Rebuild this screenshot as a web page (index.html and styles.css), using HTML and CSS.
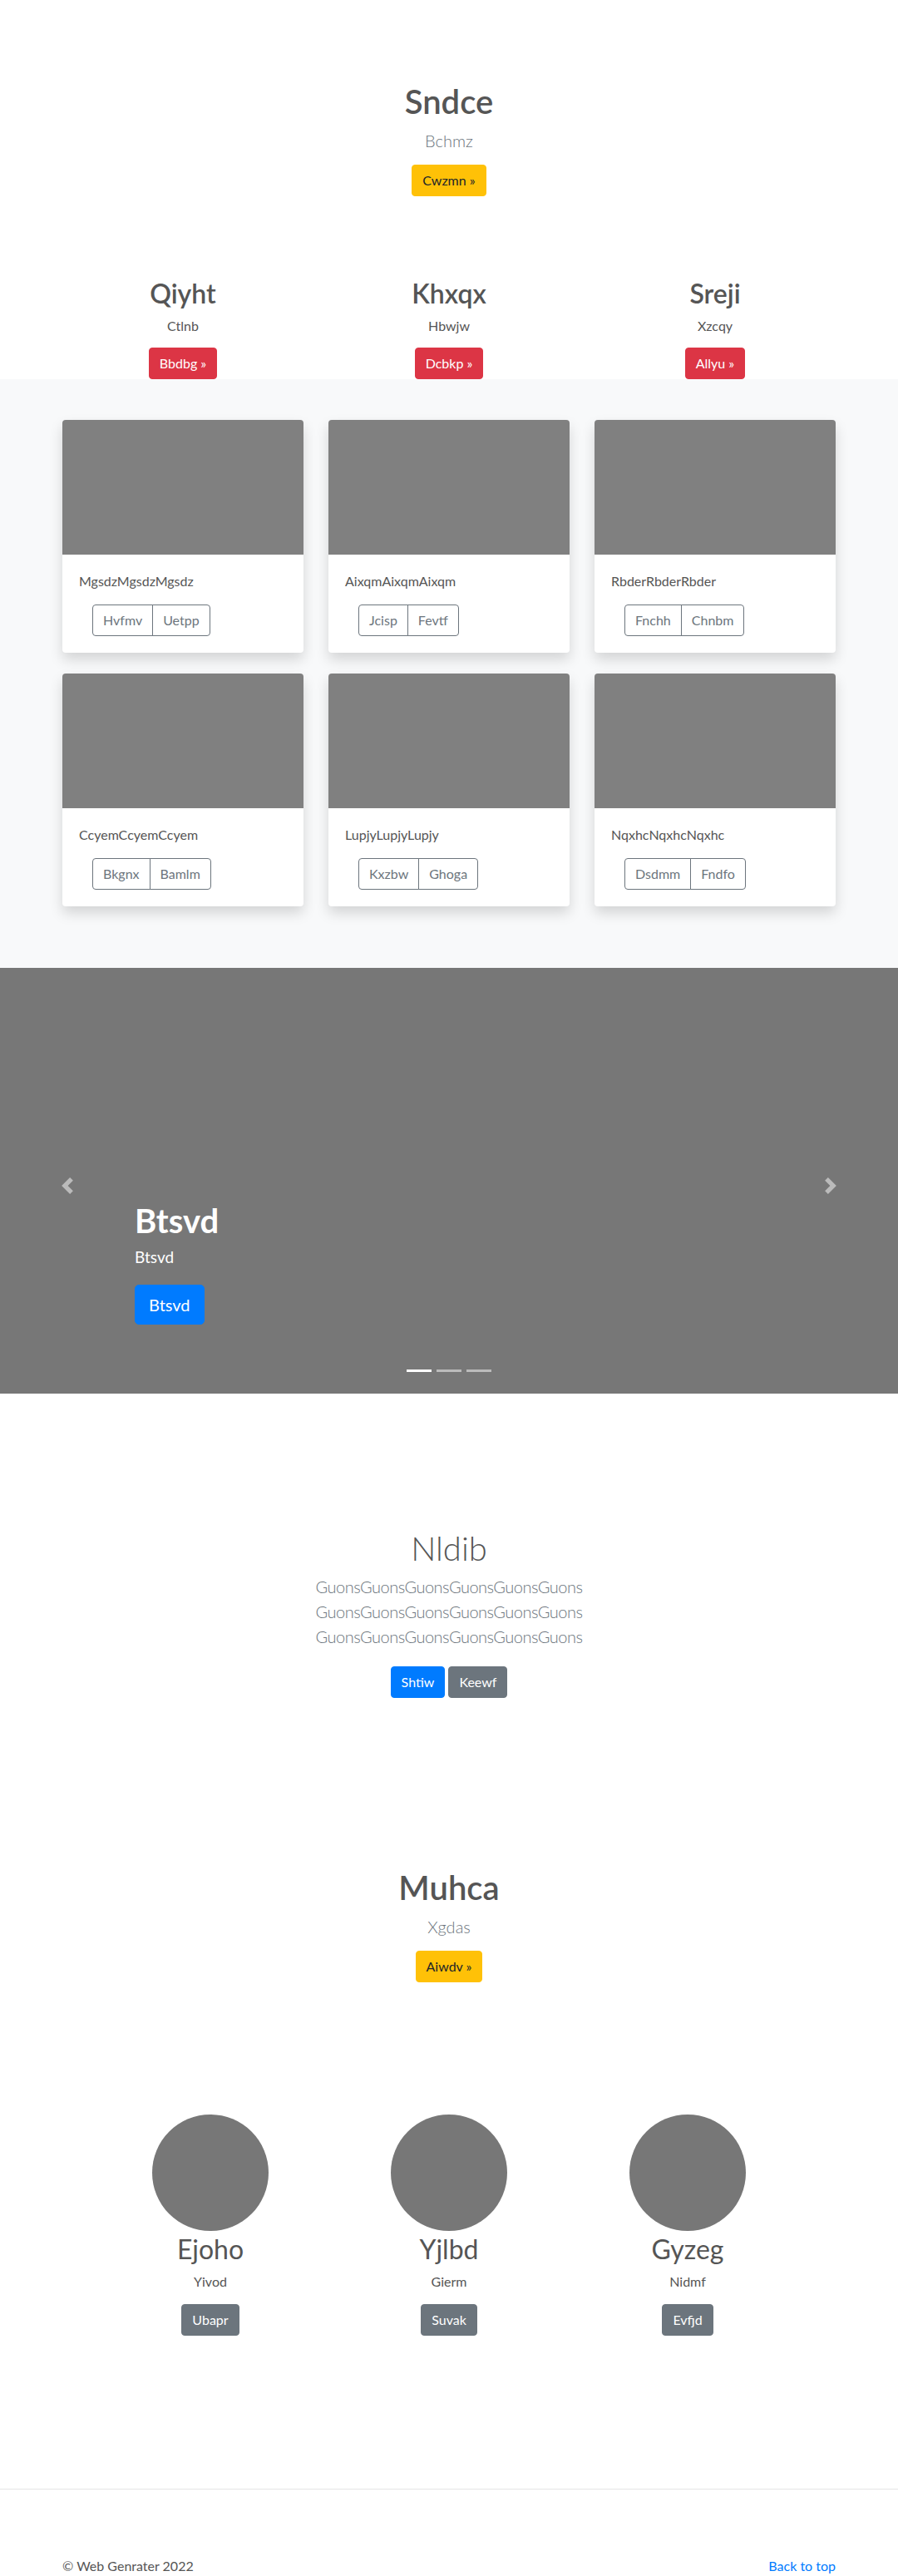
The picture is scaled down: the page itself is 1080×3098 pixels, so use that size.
FILE: index.html
```html
<!DOCTYPE html>
<html lang="en">
<head>
<meta charset="utf-8">
<title>Sndce</title>
<link rel="stylesheet" href="styles.css">
</head>
<body>
<section class="hero">
  <h1 class="hero-title">Sndce</h1>
  <p class="lead">Bchmz</p>
  <p class="btn-row"><a class="btn btn-warning" href="#">Cwzmn &raquo;</a></p>
</section>

<section class="marketing">
  <div class="mk-col">
    <h2 class="mk-title">Qiyht</h2>
    <p class="mk-text">Ctlnb</p>
    <p class="btn-row"><a class="btn btn-danger" href="#">Bbdbg &raquo;</a></p>
  </div>
  <div class="mk-col">
    <h2 class="mk-title">Khxqx</h2>
    <p class="mk-text">Hbwjw</p>
    <p class="btn-row"><a class="btn btn-danger" href="#">Dcbkp &raquo;</a></p>
  </div>
  <div class="mk-col">
    <h2 class="mk-title">Sreji</h2>
    <p class="mk-text">Xzcqy</p>
    <p class="btn-row"><a class="btn btn-danger" href="#">Allyu &raquo;</a></p>
  </div>
</section>

<section class="album">
  <div class="album-grid">
    <div class="card">
      <div class="card-img"></div>
      <div class="card-body">
        <p class="card-text">MgsdzMgsdzMgsdz</p>
        <div class="btn-group"><a class="btn btn-outline" href="#">Hvfmv</a><a class="btn btn-outline" href="#">Uetpp</a></div>
      </div>
    </div>
    <div class="card">
      <div class="card-img"></div>
      <div class="card-body">
        <p class="card-text">AixqmAixqmAixqm</p>
        <div class="btn-group"><a class="btn btn-outline" href="#">Jcisp</a><a class="btn btn-outline" href="#">Fevtf</a></div>
      </div>
    </div>
    <div class="card">
      <div class="card-img"></div>
      <div class="card-body">
        <p class="card-text">RbderRbderRbder</p>
        <div class="btn-group"><a class="btn btn-outline" href="#">Fnchh</a><a class="btn btn-outline" href="#">Chnbm</a></div>
      </div>
    </div>
    <div class="card">
      <div class="card-img"></div>
      <div class="card-body">
        <p class="card-text">CcyemCcyemCcyem</p>
        <div class="btn-group"><a class="btn btn-outline" href="#">Bkgnx</a><a class="btn btn-outline" href="#">Bamlm</a></div>
      </div>
    </div>
    <div class="card">
      <div class="card-img"></div>
      <div class="card-body">
        <p class="card-text">LupjyLupjyLupjy</p>
        <div class="btn-group"><a class="btn btn-outline" href="#">Kxzbw</a><a class="btn btn-outline" href="#">Ghoga</a></div>
      </div>
    </div>
    <div class="card">
      <div class="card-img"></div>
      <div class="card-body">
        <p class="card-text">NqxhcNqxhcNqxhc</p>
        <div class="btn-group"><a class="btn btn-outline" href="#">Dsdmm</a><a class="btn btn-outline" href="#">Fndfo</a></div>
      </div>
    </div>
  </div>
</section>

<div class="carousel">
  <a class="carousel-control prev" href="#" aria-label="Previous">
    <svg class="ctrl-icon" viewBox="0 0 8 8" width="20" height="20"><path d="M5.25 0l-4 4 4 4 1.5-1.5L4.25 4l2.5-2.5L5.25 0z"/></svg>
  </a>
  <a class="carousel-control next" href="#" aria-label="Next">
    <svg class="ctrl-icon" viewBox="0 0 8 8" width="20" height="20"><path d="M2.75 0l-1.5 1.5L3.75 4l-2.5 2.5L2.75 8l4-4-4-4z"/></svg>
  </a>
  <div class="carousel-caption">
    <h1 class="caption-title">Btsvd</h1>
    <p class="caption-text">Btsvd</p>
    <p class="btn-row"><a class="btn btn-primary btn-lg" href="#">Btsvd</a></p>
  </div>
  <ol class="indicators">
    <li class="ind active"></li>
    <li class="ind"></li>
    <li class="ind"></li>
  </ol>
</div>

<section class="jumbo">
  <h1 class="jumbo-title">Nldib</h1>
  <p class="lead jumbo-lead">GuonsGuonsGuonsGuonsGuonsGuons GuonsGuonsGuonsGuonsGuonsGuons GuonsGuonsGuonsGuonsGuonsGuons</p>
  <div class="jumbo-btns">
    <a class="btn btn-primary" href="#">Shtiw</a>
    <a class="btn btn-secondary" href="#">Keewf</a>
  </div>
</section>

<section class="hero hero2">
  <h1 class="hero-title">Muhca</h1>
  <p class="lead">Xgdas</p>
  <p class="btn-row"><a class="btn btn-warning" href="#">Aiwdv &raquo;</a></p>
</section>

<section class="team">
  <div class="team-col">
    <div class="avatar"></div>
    <h2 class="team-name">Ejoho</h2>
    <p class="team-text">Yivod</p>
    <p class="btn-row"><a class="btn btn-secondary" href="#">Ubapr</a></p>
  </div>
  <div class="team-col">
    <div class="avatar"></div>
    <h2 class="team-name">Yjlbd</h2>
    <p class="team-text">Gierm</p>
    <p class="btn-row"><a class="btn btn-secondary" href="#">Suvak</a></p>
  </div>
  <div class="team-col">
    <div class="avatar"></div>
    <h2 class="team-name">Gyzeg</h2>
    <p class="team-text">Nidmf</p>
    <p class="btn-row"><a class="btn btn-secondary" href="#">Evfjd</a></p>
  </div>
</section>

<hr class="divider">

<footer class="footer">
  <p class="copy">&copy; Web Genrater 2022</p>
  <a class="back" href="#">Back to top</a>
</footer>
</body>
</html>
```

FILE: styles.css
```css
* { box-sizing: border-box; }

html, body {
  margin: 0;
  padding: 0;
}

body {
  font-family: Lato, "Open Sans", "Liberation Sans", sans-serif;
  font-size: 16px;
  line-height: 1.5;
  color: #555;
  background: #fff;
}

p { margin: 0; }
h1, h2 { margin: 0; }

.btn {
  display: inline-block;
  font-size: 16px;
  line-height: 24px;
  padding: 6px 12px;
  border: 1px solid transparent;
  border-radius: 4px;
  text-decoration: none;
  font-weight: 400;
  text-align: center;
  vertical-align: middle;
}

.btn-warning { background: #ffc107; border-color: #ffc107; color: #212529; }
.btn-danger { background: #dc3545; border-color: #dc3545; color: #fff; }
.btn-primary { background: #007bff; border-color: #007bff; color: #fff; }
.btn-secondary { background: #6c757d; border-color: #6c757d; color: #fff; }

.btn-lg {
  font-size: 20px;
  line-height: 30px;
  padding: 8px 16px;
  border-radius: 5px;
}

.btn-row { line-height: 0; }

/* Hero */
.hero {
  padding-top: 98px;
  text-align: center;
}

.hero-title {
  font-size: 40px;
  line-height: 48px;
  font-weight: 600;
  color: #555;
  margin-bottom: 8px;
}

.lead {
  font-size: 20px;
  line-height: 30px;
  font-weight: 300;
  color: #6c757d;
  margin-bottom: 14px;
}

/* Marketing */
.marketing {
  width: 960px;
  margin: 98px auto 0;
  display: grid;
  grid-template-columns: repeat(3, 320px);
  text-align: center;
}

.mk-title {
  font-size: 32px;
  line-height: 38px;
  font-weight: 600;
  color: #555;
  margin-bottom: 8px;
}

.mk-text {
  margin-bottom: 14px;
}

/* Album */
.album {
  background: #f8f9fa;
  padding: 49px 0 74px;
}

.album-grid {
  width: 930px;
  margin: 0 auto;
  display: grid;
  grid-template-columns: repeat(3, 290px);
  column-gap: 30px;
  row-gap: 25px;
}

.card {
  background: #fff;
  border-radius: 4px;
  overflow: hidden;
  box-shadow: 0 8px 16px rgba(0, 0, 0, 0.15);
}

.card-img {
  height: 162px;
  background: #808080;
}

.card-body {
  padding: 20px;
}

.card-text {
  margin-bottom: 16px;
}

.btn-group {
  display: inline-flex;
  margin-left: 16px;
}

.btn-outline {
  color: #6c757d;
  border-color: #6c757d;
  background: transparent;
  border-radius: 0;
}

.btn-group .btn-outline:first-child {
  border-radius: 4px 0 0 4px;
}

.btn-group .btn-outline:last-child {
  border-radius: 0 4px 4px 0;
  margin-left: -1px;
}

/* Carousel */
.carousel {
  position: relative;
  height: 512px;
  background: #777;
}

.carousel-control {
  position: absolute;
  top: 0;
  bottom: 0;
  width: 15%;
  display: flex;
  align-items: center;
  justify-content: center;
  padding-top: 12px;
  opacity: 0.5;
}

.carousel-control.prev { left: 0; }
.carousel-control.next { right: 0; }

.ctrl-icon { fill: #fff; display: block; }

.carousel-caption {
  position: absolute;
  left: 15%;
  right: 15%;
  bottom: 83px;
  color: #fff;
  text-align: left;
}

.caption-title {
  font-size: 40px;
  line-height: 48px;
  font-weight: 700;
  color: #fff;
  margin-bottom: 6px;
}

.caption-text {
  font-size: 19px;
  line-height: 28px;
  margin-bottom: 19px;
}

.indicators {
  position: absolute;
  left: 0;
  right: 0;
  bottom: 26px;
  margin: 0;
  padding: 0;
  list-style: none;
  display: flex;
  justify-content: center;
  gap: 6px;
}

.ind {
  width: 30px;
  height: 3px;
  background: rgba(255, 255, 255, 0.5);
}

.ind.active { background: #fff; }

/* Jumbo */
.jumbo {
  padding-top: 162px;
  text-align: center;
}

.jumbo-title {
  font-size: 40px;
  line-height: 48px;
  font-weight: 300;
  color: #555;
  margin-bottom: 7px;
}

.jumbo-lead {
  max-width: 480px;
  margin: 0 auto 21px;
  letter-spacing: -0.5px;
}

.jumbo-btns {
  display: flex;
  justify-content: center;
  gap: 4px;
}

/* Hero 2 */
.hero2 {
  padding-top: 204px;
}

/* Team */
.team {
  width: 861px;
  margin: 159px auto 0;
  display: grid;
  grid-template-columns: repeat(3, 287px);
  text-align: center;
}

.avatar {
  width: 140px;
  height: 140px;
  border-radius: 50%;
  background: #777;
  margin: 0 auto;
}

.team-name {
  font-size: 32px;
  line-height: 38px;
  font-weight: 400;
  color: #555;
  margin-top: 3px;
  margin-bottom: 8px;
}

.team-text {
  margin-bottom: 15px;
}

/* Footer */
.divider {
  margin: 184px 0 0;
  border: 0;
  border-top: 1px solid #e5e5e5;
  height: 0;
}

.footer {
  width: 930px;
  margin: 0 auto;
  padding-top: 80px;
  display: flex;
  justify-content: space-between;
  align-items: baseline;
}

.back {
  color: #007bff;
  text-decoration: none;
}
```
